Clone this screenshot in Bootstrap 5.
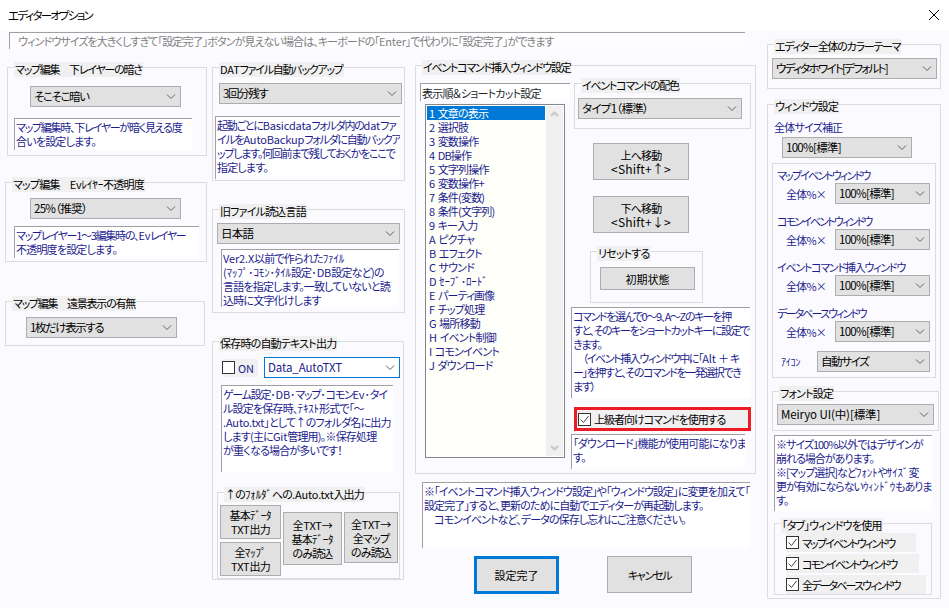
<!DOCTYPE html>
<html lang="ja">
<head>
<meta charset="UTF-8">
<meta name="viewport" content="width=device-width, initial-scale=1.0">
<title>エディターオプション</title>
<link href="https://cdn.jsdelivr.net/npm/bootstrap@5.3.0/dist/css/bootstrap.min.css" rel="stylesheet">
<style>
    body {
        background: #fbfbff;
        width: 949px;
        height: 608px;
        overflow: hidden;
        font-family: "Noto Sans CJK JP", "Noto Sans", sans-serif;
        font-size: 11px;
        line-height: 14px;
        letter-spacing: -.8px;
        font-feature-settings: "palt";
        color: #000;
    }
    .ltn { letter-spacing: -.15px; }
    .tight { letter-spacing: -1.25px; }
    .tighter { letter-spacing: -1.85px; }
    .title-bar { background: #fff; height: 30px; padding: 0 10px 0 8px; font-size: 11.5px; letter-spacing: -1.8px; }
    .left-area { width: 767px; }
    .note-top { margin: 2px 0 0 9px; width: 736px; height: 17px; background: #fdfdff; border-left: 1px solid #a0a0a0; border-top: 1px solid #a0a0a0; padding: 1px 0 0 8px; color: #808080; white-space: nowrap; letter-spacing: -.9px; }

    .grp { position: relative; border: 1px solid #dcdcdc; }
    .grp-label { position: absolute; left: 6px; top: -6px; background: #f0f0f0; line-height: 15px; padding: 0 1px; white-space: nowrap; }
    .tbox { background: #fff; border-left: 1px solid #a0a0a0; border-top: 1px solid #a0a0a0; padding: 1px 0 0 1px; color: #1c1c8e; white-space: nowrap; overflow: hidden; }
    .sel.form-select {
        display: block; width: 100px; height: 21px; padding: 0 0 0 3px; border: 1px solid #adadad; border-radius: 0;
        background-color: #e1e1e1; font-size: 11.500px; line-height: 19px; color: #000; letter-spacing: -.7px; font-feature-settings: "palt";
        background-image: url("data:image/svg+xml,%3csvg xmlns='http://www.w3.org/2000/svg' viewBox='0 0 10 6'%3e%3cpath fill='none' stroke='%23606060' d='M1 .5l4 4 4-4'/%3e%3c/svg%3e");
        background-size: 10px 6px; background-position: right 4px center;
    }
    .sel.sel-lat.form-select { letter-spacing: -.1px; }
    .sel.sel-k.form-select { letter-spacing: -1.4px; }
    .sel.sel-kk.form-select { letter-spacing: -1.7px; }
    .btn-win.btn { display: block; padding: 0; background: #e1e1e1; border: 1px solid #adadad; border-radius: 0; font-size: 11px; line-height: 14px; color: #000; letter-spacing: -.8px; font-feature-settings: "palt"; white-space: nowrap; }
    .key-hint { font-size: 12px; letter-spacing: .2px; }
    .blue-text { color: #1c1c8e; }
    .chk.form-check-input { width: 13px; height: 13px; margin: 0; border: 1px solid #333; border-radius: 0; background-color: #fff; flex: none; }
    .chk.form-check-input:checked {
        background-color: #fff; border-color: #333; background-size: 11px 11px;
        background-image: url("data:image/svg+xml,%3csvg xmlns='http://www.w3.org/2000/svg' viewBox='0 0 11 11'%3e%3cpath fill='none' stroke='%23444' d='M1.5 5.500l3 3 5-6.500'/%3e%3c/svg%3e");
    }
    .chk-row { background: #f0f0f0; gap: 3px; white-space: nowrap; }

    /* column 1 */
    .col-a { width: 212px; }
    .a1 { margin: 18px 0 0 7px; width: 200px; height: 89px; }
    .a1 .sel { margin: 18px 0 0 22px; width: 151px; }
    .a1 .tbox { margin: 11px 0 0 6px; width: 178px; height: 32px; }
    .a2 { margin: 26px 0 0 5px; width: 202px; height: 80px; }
    .a2 .sel { margin: 15px 0 0 24px; width: 151px; }
    .a2 .tbox { margin: 7px 0 0 8px; width: 185px; height: 32px; }
    .a3 { margin: 39px 0 0 5px; width: 200px; height: 45px; }
    .a3 .sel { margin: 15px 0 0 20px; width: 151px; }

    /* column 2 */
    .col-b { width: 203px; }
    .b1 { margin-top: 18px; width: 193px; height: 114px; }
    .b1 .sel { margin: 15px 0 0 6px; width: 183px; }
    .b1 .tbox { margin: 12px 0 0 2px; width: 185px; height: 63px; }
    .b2 { margin-top: 28px; width: 193px; height: 104px; }
    .b2 .sel { margin: 13px 0 0 4px; width: 183px; }
    .b2 .tbox { margin: 5px 0 0 8px; width: 178px; height: 58px; }
    .b3 { margin-top: 28px; width: 192px; height: 239px; }
    .b3-top { margin: 15px 0 0 9px; }
    .b3-check { width: 36px; height: 18px; gap: 3px; background: #f0f0f0; margin-right: 6px; color: #1c1c8e; }
    .b3 .sel { width: 136px; background-color: #fff; border: 1px solid #0078d7; color: #1c1c8e; }
    .b3 .tbox { margin: 7px 0 0 8px; width: 172px; height: 87px; }
    .b3-inner { margin: 20px 0 0 4px; width: 183px; height: 87px; }
    .b3-btns { padding: 12px 0 0 2px; }
    .b3-stack { width: 61px; gap: 3px; margin-right: 2px; }
    .b3-stack .btn-win { height: 34px; width: 61px; }
    .b3-w1 { margin-top: 7px; margin-right: 2px; width: 59px; height: 53px; }
    .b3-w2 { margin-top: 7px; width: 54px; height: 51px; }

    /* column 3 */
    .col-c { width: 352px; }
    .c-main { margin-top: 16px; width: 341px; height: 409px; }
    .c-left { width: 155px; padding: 17px 0 0 4px; }
    .order-label { width: 150px; height: 18px; padding-top: 2px; }
    .cmd-list { margin: 3px 0 0 5px; width: 140px; height: 354px; border: 1px solid #828790; background: #fffffa; padding: 1px; }
    .cmd-list .list-group { width: 119px; border-radius: 0; }
    .cmd-list .list-group-item { padding: 0 0 0 2px; background: transparent; border: 0; color: #1c1c8e; font-size: 11px; line-height: 14px; height: 14px; white-space: nowrap; }
    .cmd-list .list-group-item.active { background: #0078d7; color: #fff; }
    .scroll-rail { width: 17px; margin-left: 1px; background: #f0f0f0; padding: 5px 0; }
    .c-right { flex: 1; padding-top: 17px; }
    .c-color { margin-left: 3px; width: 177px; height: 46px; }
    .c-color .sel { margin: 14px 0 0 3px; width: 164px; }
    .c-move { margin: 14px 0 0 22px; width: 96px; height: 37px; }
    .c-move + .c-move { margin-top: 16px; }
    .c-reset { margin: 18px 0 0 19px; width: 113px; height: 52px; }
    .c-reset .btn-win.btn { margin: 15px 0 0 9px; width: 95px; height: 23px; letter-spacing: 0; }
    .c-desc { margin-top: 4px; width: 179px; height: 91px; letter-spacing: -1.4px; }
    .c-adv { margin: 9px 0 0 3px; width: 177px; height: 24px; border: 3px solid #ed1c24; padding-left: 1px; gap: 3px; background: #f0f0f0; white-space: nowrap; letter-spacing: -1px; }
    .c-adv-note { margin-top: 3px; width: 174px; height: 35px; }
    .c-note { margin: 8px 0 0 7px; width: 328px; height: 66px; letter-spacing: -.9px; }
    .c-ok { margin: 8px 0 0 59px; }
    .btn-ok.btn-win.btn { width: 85px; height: 38px; border: 3px solid #0078d7; letter-spacing: 0; }
    .btn-cancel.btn-win.btn { margin-left: 48px; width: 85px; height: 37px; letter-spacing: -1.3px; }

    /* column 4 */
    .col-d { width: 182px; margin-top: 14px; }
    .d1 { width: 174px; height: 45px; }
    .d1 .sel { margin: 13px 0 0 4px; width: 165px; }
    .d2 { margin-top: 15px; width: 174px; height: 495px; }
    .d2-cap { margin: 15px 0 0 6px; }
    .d2-main.sel { margin: 3px 0 0 14px; width: 130px; }
    .d2-panel { margin: 5px 0 0 4px; width: 164px; height: 215px; border: 1px solid #dcdcdc; padding: 4px 0 0 4px; }
    .win-cap { margin-top: 10px; }
    .win-cap:first-child { margin-top: 0; }
    .win-row { margin-top: 1px; white-space: nowrap; }
    .win-row > span { width: 58px; padding-left: 9px; }
    .win-row .sel { width: 95px; }
    .win-icon { margin-top: 9px; white-space: nowrap; }
    .win-icon > span { width: 40px; padding-left: 4px; font-size: 10px; letter-spacing: -.2px; }
    .win-icon .sel { width: 113px; }
    .d-font { margin: 13px 0 0 4px; width: 167px; height: 40px; }
    .d-font .sel { margin: 12px 0 0 4px; width: 157px; }
    .d-note { margin: 4px 0 0 6px; width: 158px; height: 76px; letter-spacing: -1px; }
    .d-tabs { margin: 12px 0 0 6px; width: 158px; height: 72px; }
    .d-tabs .chk-row { margin-left: 11px; height: 19px; }
    .d-tabs .chk-row:nth-child(2) { margin-top: 9px; width: 130px; }
    .d-tabs .chk-row:nth-child(3) { margin-top: 2px; width: 133px; }
    .d-tabs .chk-row:nth-child(4) { margin-top: 2px; width: 140px; }
</style>
</head>
<body>
<div class="title-bar d-flex align-items-center justify-content-between">
    <span>エディターオプション</span>
    <svg width="10" height="10" viewBox="0 0 10 10"><path d="M0 0L10 10M10 0L0 10" stroke="#000" fill="none"/></svg>
</div>

<div class="d-flex">
    <div class="left-area">
        <div class="note-top">ウィンドウサイズを大きくしすぎて「設定完了」ボタンが見えない場合は、キーボードの「<span class="ltn">Enter</span>」で代わりに「設定完了」ができます</div>
        <div class="d-flex">
            <!-- column 1 -->
            <div class="col-a">
                <div class="grp a1">
                    <div class="grp-label tight">マップ編集&emsp;下レイヤーの暗さ</div>
                    <select class="form-select sel sel-k"><option>そこそこ暗い</option></select>
                    <div class="tbox"><span class="tight">マップ編集時、下レイヤーが暗く見える度</span><br>合いを設定します。</div>
                </div>
                <div class="grp a2">
                    <div class="grp-label">マップ編集&emsp;<span class="ltn">Evﾚｲﾔｰ</span>不透明度</div>
                    <select class="form-select sel"><option>25%（推奨）</option></select>
                    <div class="tbox"><span class="tight">マップレイヤー1～3編集時の、<span class="ltn">Ev</span>レイヤー</span><br>不透明度を設定します。</div>
                </div>
                <div class="grp a3">
                    <div class="grp-label tight">マップ編集&emsp;遠景表示の有無</div>
                    <select class="form-select sel sel-k"><option>1枚だけ表示する</option></select>
                </div>
            </div>

            <!-- column 2 -->
            <div class="col-b">
                <div class="grp b1">
                    <div class="grp-label tight"><span class="ltn">DAT</span>ファイル自動バックアップ</div>
                    <select class="form-select sel sel-k"><option>3回分残す</option></select>
                    <div class="tbox"><span class="tight">起動ごとに<span class="ltn">Basicdata</span>フォルダ内の<span class="ltn">dat</span>ファ</span><br><span class="tight">イルを<span class="ltn">AutoBackup</span>フォルダに自動バックア</span><br><span class="tight">ップします。何回前まで残しておくかをここで</span><br>指定します。</div>
                </div>
                <div class="grp b2">
                    <div class="grp-label">旧ファイル読込言語</div>
                    <select class="form-select sel"><option>日本語</option></select>
                    <div class="tbox"><span class="ltn">Ver2.X</span>以前で作られた<span class="ltn">ﾌｧｲﾙ</span><br><span class="ltn">(ﾏｯﾌﾟ･ｺﾓﾝ･ﾀｲﾙ</span>設定<span class="ltn">･DB</span>設定など)の<br>言語を指定します。一致していないと読<br>込時に文字化けします</div>
                </div>
                <div class="grp b3">
                    <div class="grp-label">保存時の自動テキスト出力</div>
                    <div class="b3-top d-flex align-items-center">
                        <div class="b3-check d-flex align-items-center"><input class="form-check-input chk" type="checkbox"><span class="ltn">ON</span></div>
                        <select class="form-select sel sel-lat"><option>Data_AutoTXT</option></select>
                    </div>
                    <div class="tbox"><span class="tight">ゲーム設定<span class="ltn">･DB･</span>マップ<span class="ltn">･</span>コモン<span class="ltn">Ev･</span>タイ</span><br>ル設定を保存時、<span class="ltn">ﾃｷｽﾄ</span>形式で「～<br><span class="ltn">.Auto.txt</span>」として↑のフォルダ名に出力<br>します(主に<span class="ltn">Git</span>管理用)。※保存処理<br>が重くなる場合が多いです！</div>
                    <div class="grp b3-inner">
                        <div class="grp-label">↑の<span class="ltn">ﾌｫﾙﾀﾞ</span>への<span class="ltn">.Auto.txt</span>入出力</div>
                        <div class="b3-btns d-flex align-items-start">
                            <div class="b3-stack d-flex flex-column">
                                <button class="btn btn-win">基本<span class="ltn">ﾃﾞｰﾀ</span><br><span class="ltn">TXT</span>出力</button>
                                <button class="btn btn-win">全<span class="ltn">ﾏｯﾌﾟ</span><br><span class="ltn">TXT</span>出力</button>
                            </div>
                            <button class="btn btn-win b3-w1"><span class="ltn">全TXT→</span><br>基本<span class="ltn">ﾃﾞｰﾀ</span><br>のみ読込</button>
                            <button class="btn btn-win b3-w2"><span class="ltn">全TXT→</span><br>全マップ<br>のみ読込</button>
                        </div>
                    </div>
                </div>
            </div>

            <!-- column 3 -->
            <div class="col-c">
                <div class="grp c-main d-flex">
                    <div class="grp-label tight">イベントコマンド挿入ウィンドウ設定</div>
                    <div class="c-left">
                        <div class="tbox order-label text-dark">表示順＆ショートカット設定</div>
                        <div class="cmd-list d-flex">
                            <div class="list-group">
                                <div class="list-group-item active">1&nbsp;&nbsp;文章の表示</div>
                                <div class="list-group-item">2&nbsp;&nbsp;選択肢</div>
                                <div class="list-group-item">3&nbsp;&nbsp;変数操作</div>
                                <div class="list-group-item">4&nbsp;&nbsp;DB操作</div>
                                <div class="list-group-item">5&nbsp;&nbsp;文字列操作</div>
                                <div class="list-group-item">6&nbsp;&nbsp;変数操作+</div>
                                <div class="list-group-item">7&nbsp;&nbsp;条件(変数)</div>
                                <div class="list-group-item">8&nbsp;&nbsp;条件(文字列)</div>
                                <div class="list-group-item">9&nbsp;&nbsp;キー入力</div>
                                <div class="list-group-item">A&nbsp;&nbsp;ピクチャ</div>
                                <div class="list-group-item">B&nbsp;&nbsp;エフェクト</div>
                                <div class="list-group-item">C&nbsp;&nbsp;サウンド</div>
                                <div class="list-group-item">D&nbsp;&nbsp;<span class="ltn">ｾｰﾌﾞ･ﾛｰﾄﾞ</span></div>
                                <div class="list-group-item">E&nbsp;&nbsp;パーティ画像</div>
                                <div class="list-group-item">F&nbsp;&nbsp;チップ処理</div>
                                <div class="list-group-item">G&nbsp;&nbsp;場所移動</div>
                                <div class="list-group-item">H&nbsp;&nbsp;イベント制御</div>
                                <div class="list-group-item">I&nbsp;&nbsp;コモンイベント</div>
                                <div class="list-group-item">J&nbsp;&nbsp;ダウンロード</div>
                            </div>
                            <div class="scroll-rail d-flex flex-column justify-content-between align-items-center">
                                <svg width="9" height="6" viewBox="0 0 9 6"><path d="M1 5l3.500-3.500 3.500 3.500" fill="none" stroke="#c8c8c8" stroke-width="2"/></svg>
                                <svg width="9" height="6" viewBox="0 0 9 6"><path d="M1 1l3.500 3.500 3.500-3.500" fill="none" stroke="#c8c8c8" stroke-width="2"/></svg>
                            </div>
                        </div>
                    </div>
                    <div class="c-right">
                        <div class="grp c-color">
                            <div class="grp-label tight">イベントコマンドの配色</div>
                            <select class="form-select sel"><option>タイプ1（標準）</option></select>
                        </div>
                        <button class="btn btn-win c-move">上へ移動<br><span class="key-hint">&lt;Shift+↑&gt;</span></button>
                        <button class="btn btn-win c-move">下へ移動<br><span class="key-hint">&lt;Shift+↓&gt;</span></button>
                        <div class="grp c-reset">
                            <div class="grp-label">リセットする</div>
                            <button class="btn btn-win">初期状態</button>
                        </div>
                        <div class="tbox c-desc">コマンドを選んで0～9、A～Zのキーを押<br>すと、そのキーをショートカットキーに設定で<br>きます。<br>&emsp;（イベント挿入ウィンドウ中に「<span class="ltn">Alt ＋</span> キ<br>ー」を押すと、そのコマンドを一発選択でき<br>ます）</div>
                        <div class="c-adv d-flex align-items-center">
                            <input class="form-check-input chk" type="checkbox" checked>
                            <span>上級者向けコマンドを使用する</span>
                        </div>
                        <div class="tbox c-adv-note">「ダウンロード」機能が使用可能になりま<br>す。</div>
                    </div>
                </div>
                <div class="tbox c-note">※「イベントコマンド挿入ウィンドウ設定」や「ウィンドウ設定」に変更を加えて「<br>設定完了」すると、更新のために自動でエディターが再起動します。<br>&emsp;コモンイベントなど、データの保存し忘れにご注意ください。</div>
                <div class="c-ok d-flex">
                    <button class="btn btn-win btn-ok">設定完了</button>
                    <button class="btn btn-win btn-cancel">キャンセル</button>
                </div>
            </div>
        </div>
    </div>

    <!-- column 4 -->
    <div class="col-d">
        <div class="grp d1">
            <div class="grp-label tight">エディター全体のカラーテーマ</div>
            <select class="form-select sel sel-kk"><option>ウディタホワイト[デフォルト]</option></select>
        </div>
        <div class="grp d2">
            <div class="grp-label">ウィンドウ設定</div>
            <div class="d2-cap blue-text">全体サイズ補正</div>
            <select class="form-select sel d2-main"><option>100%[標準]</option></select>
            <div class="d2-panel blue-text">
                <div class="win-cap tighter">マップイベントウィンドウ</div>
                <div class="win-row d-flex align-items-center"><span>全体%×</span><select class="form-select sel"><option>100%[標準]</option></select></div>
                <div class="win-cap tighter">コモンイベントウィンドウ</div>
                <div class="win-row d-flex align-items-center"><span>全体%×</span><select class="form-select sel"><option>100%[標準]</option></select></div>
                <div class="win-cap tight">イベントコマンド挿入ウィンドウ</div>
                <div class="win-row d-flex align-items-center"><span>全体%×</span><select class="form-select sel"><option>100%[標準]</option></select></div>
                <div class="win-cap tighter">データベースウィンドウ</div>
                <div class="win-row d-flex align-items-center"><span>全体%×</span><select class="form-select sel"><option>100%[標準]</option></select></div>
                <div class="win-icon d-flex align-items-center"><span>ｱｲｺﾝ</span><select class="form-select sel sel-k"><option>自動サイズ</option></select></div>
            </div>
            <div class="grp d-font">
                <div class="grp-label">フォント設定</div>
                <select class="form-select sel sel-lat"><option>Meiryo UI(中)[標準]</option></select>
            </div>
            <div class="tbox d-note">※サイズ100%以外ではデザインが<br>崩れる場合があります。<br>※[マップ選択]など<span class="ltn">ﾌｫﾝﾄ</span>や<span class="ltn">ｻｲｽﾞ</span>変<br>更が有効にならない<span class="ltn">ｳｨﾝﾄﾞｳ</span>もありま<br>す。</div>
            <div class="grp d-tabs">
                <div class="grp-label">「タブ」ウィンドウを使用</div>
                <div class="chk-row d-flex align-items-center tighter"><input class="form-check-input chk" type="checkbox" checked><span>マップイベントウィンドウ</span></div>
                <div class="chk-row d-flex align-items-center tighter"><input class="form-check-input chk" type="checkbox" checked><span>コモンイベントウィンドウ</span></div>
                <div class="chk-row d-flex align-items-center tighter"><input class="form-check-input chk" type="checkbox" checked><span>全データベースウィンドウ</span></div>
            </div>
        </div>
    </div>
</div>
<script src="https://cdn.jsdelivr.net/npm/bootstrap@5.3.0/dist/js/bootstrap.bundle.min.js"></script>
</body>
</html>
